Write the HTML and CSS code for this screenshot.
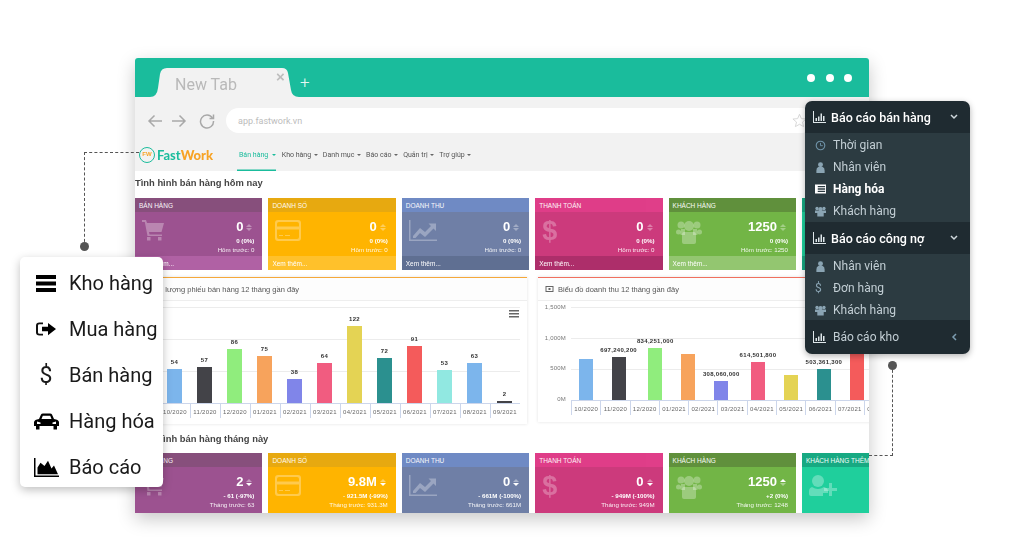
FILE: index.html
```html
<!DOCTYPE html>
<html>

<head>
  <meta http-equiv="Content-Type" content="text/html; charset=UTF-8" />
  <title>FastWork</title>
  <link rel="stylesheet" href="styles.css">
</head>

<body>
  <!-- shared icons -->
  <svg class="sprite" width="0" height="0">
    <symbol id="i-cart" viewBox="0 0 22 21"><path d="M0 0h4l1 3h17l-2.500 9H7l.5 2.500H20V16H5.500L2.800 2H0z" /><rect x="5" y="17" width="3.500" height="3.500" /><rect x="16" y="17" width="3.500" height="3.500" /></symbol>
    <symbol id="i-card" viewBox="0 0 26 21"><path fill-rule="evenodd" d="M3 0h20a3 3 0 0 1 3 3v15a3 3 0 0 1-3 3H3a3 3 0 0 1-3-3V3a3 3 0 0 1 3-3zm-1 4v2.500h22V4a2 2 0 0 0-2-2H4a2 2 0 0 0-2 2zm0 5.500V17a2 2 0 0 0 2 2h18a2 2 0 0 0 2-2V9.500zM4 15h4v1H4zm6 0h5v1h-5z" /></symbol>
    <symbol id="i-line" viewBox="0 0 28 21"><path d="M0 0h1.500v19.500H28V21H0z" /><path d="M4 16l7-8 5 4 6-6-2.500-2.500H27V11l-2.500-2.500-8.500 8.500-5-4-4.500 5H4z" /></symbol>
    <symbol id="i-users" viewBox="0 0 26 24"><circle cx="5" cy="5" r="3.500" /><circle cx="21" cy="5" r="3.500" /><circle cx="13" cy="6" r="5" /><circle cx="2.500" cy="12" r="2.500" /><circle cx="23.500" cy="12" r="2.500" /><path d="M5 9h4v6H4.500zM21 9h-4v6h4.500z" /><path d="M8 12h10q2 0 2 3v7q0 2-2 2H8q-2 0-2-2v-7q0-3 2-3z" /></symbol>
    <symbol id="i-userplus" viewBox="0 0 28 21"><circle cx="9" cy="6" r="6" /><path d="M3 12q6 4 12 0 4 1 4 4v2H14v3H2q-2 0-2-2v-3q0-3 3-4z" /><path d="M20 8h3v5h5v3h-5v5h-3v-5h-5v-3h5z" /></symbol>
    <symbol id="i-barchart" viewBox="0 0 13 12"><path d="M0 0h1v11h12v1H0z" /><path d="M2.500 10V7H4v3zM5 10V5.500h1.500V10zM7.500 10V2.500H9V10zM10 10V5h1.500v5z" /></symbol>
    <symbol id="i-clock" viewBox="0 0 12 12"><circle cx="6" cy="6" r="4.700" fill="none" stroke="currentColor" stroke-width="1.200" /><path d="M6 3.200v3h2.500" fill="none" stroke="currentColor" /></symbol>
    <symbol id="i-user" viewBox="0 0 12 12"><circle cx="6" cy="3" r="2.700" /><path d="M3.500 5.500h5q2 .5 2 4V12h-9V9.500q0-3.500 2-4z" /></symbol>
    <symbol id="i-list" viewBox="0 0 12 10"><path fill-rule="evenodd" d="M0 0h12v10H0zM3 1.800v1.400h8V1.800zM3 4.300v1.400h8V4.300zM3 6.800v1.400h8V6.800z" /></symbol>
    <symbol id="i-crowd" viewBox="0 0 12 11"><circle cx="2.200" cy="2.200" r="1.800" /><circle cx="9.800" cy="2.200" r="1.800" /><circle cx="6" cy="3" r="2.300" /><path d="M0 4.500h12V7H9.500v4h-7V7H0z" /></symbol>
    <symbol id="i-down" viewBox="0 0 8 6"><path d="M1 1l3 3 3-3" fill="none" stroke="currentColor" stroke-width="1.500" /></symbol>
    <symbol id="i-left" viewBox="0 0 6 8"><path d="M5 1L2 4l3 3" fill="none" stroke="currentColor" stroke-width="1.500" /></symbol>
  </svg>

  <div class="browser">
    <div class="tabbar">
      <div class="tab">
        <svg class="tab-shape" width="149" height="29" viewBox="0 0 149 29"><path d="M0 29q7 0 8-9l2-14q1-6 7-6h115q5 0 6 5l3 17q1 7 8 7z" /></svg>
        <span class="tab-title">New Tab</span>
        <span class="tab-close">×</span>
      </div>
      <span class="tab-new">+</span>
      <div class="win-dots"><i></i><i></i><i></i></div>
    </div>

    <div class="toolbar">
      <svg class="tool" width="16" height="14" viewBox="0 0 16 14"><path d="M15 7H2M7.500 1.500L2 7l5.500 5.500" /></svg>
      <svg class="tool" width="16" height="14" viewBox="0 0 16 14"><path d="M1 7h13M8.500 1.500L14 7l-5.500 5.500" /></svg>
      <svg class="tool reload" width="16" height="16" viewBox="0 0 16 16"><path d="M13.500 5A6.500 6.500 0 1 0 14.500 8" /><path d="M14.500 1.500V5.500H10.500" /></svg>
      <div class="address">
        <span>app.fastwork.vn</span>
        <svg class="star" width="15" height="15" viewBox="0 0 24 24"><path d="M12 2l3 7 7.500.6-5.700 4.900 1.800 7.300L12 18l-6.600 3.800 1.800-7.300L1.500 9.600 9 9z" /></svg>
      </div>
    </div>

    <div class="appnav">
      <div class="logo">
        <span class="logo-mark">FW</span>
        <span class="logo-text">Fast<b>Work</b></span>
      </div>
      <ul class="menu">
        <li class="active">Bán hàng</li>
        <li>Kho hàng</li>
        <li>Danh mục</li>
        <li>Báo cáo</li>
        <li>Quản trị</li>
        <li>Trợ giúp</li>
      </ul>
    </div>

    <h3 class="section-title">Tình hình bán hàng hôm nay</h3>
    <div class="cards">
      <div class="card purple">
        <div class="card-head">BÁN HÀNG</div>
        <div class="card-body">
          <svg class="card-icon" width="22" height="21"><use href="#i-cart" /></svg>
          <div class="figures">
            <div class="num">0<span class="sort"></span></div>
            <div class="pct">0 (0%)</div>
            <div class="prev">Hôm trước: 0</div>
          </div>
        </div>
        <div class="card-foot">Xem thêm...</div>
      </div>
      <div class="card yellow">
        <div class="card-head">DOANH SỐ</div>
        <div class="card-body">
          <svg class="card-icon" width="26" height="21"><use href="#i-card" /></svg>
          <div class="figures">
            <div class="num">0<span class="sort"></span></div>
            <div class="pct">0 (0%)</div>
            <div class="prev">Hôm trước: 0</div>
          </div>
        </div>
        <div class="card-foot">Xem thêm...</div>
      </div>
      <div class="card blue">
        <div class="card-head">DOANH THU</div>
        <div class="card-body">
          <svg class="card-icon" width="28" height="21"><use href="#i-line" /></svg>
          <div class="figures">
            <div class="num">0<span class="sort"></span></div>
            <div class="pct">0 (0%)</div>
            <div class="prev">Hôm trước: 0</div>
          </div>
        </div>
        <div class="card-foot">Xem thêm...</div>
      </div>
      <div class="card pink">
        <div class="card-head">THANH TOÁN</div>
        <div class="card-body">
          <span class="card-dollar">$</span>
          <div class="figures">
            <div class="num">0<span class="sort"></span></div>
            <div class="pct">0 (0%)</div>
            <div class="prev">Hôm trước: 0</div>
          </div>
        </div>
        <div class="card-foot">Xem thêm...</div>
      </div>
      <div class="card green">
        <div class="card-head">KHÁCH HÀNG</div>
        <div class="card-body">
          <svg class="card-icon" width="26" height="24"><use href="#i-users" /></svg>
          <div class="figures">
            <div class="num">1250<span class="sort"></span></div>
            <div class="pct">0 (0%)</div>
            <div class="prev">Hôm trước: 1250</div>
          </div>
        </div>
        <div class="card-foot">Xem thêm...</div>
      </div>
      <div class="card teal">
        <div class="card-head">KHÁCH HÀNG THÊM</div>
        <div class="card-body"></div>
        <div class="card-foot"></div>
      </div>
    </div>

    <div class="charts">
      <div class="panel panel-orange">
        <div class="panel-head panel-head-first">Số lượng phiếu bán hàng 12 tháng gần đây</div>
        <div class="chart chart-count">
          <svg class="chart-menu" width="10" height="8" viewBox="0 0 10 8"><path d="M0 0h10v1.500H0zM0 3h10v1.500H0zM0 6h10v1.500H0z" /></svg>
          <div class="plot">
            <div class="col"><em>54</em><i style="height:34px;background:#7cb5ec"></i></div>
            <div class="col"><em>57</em><i style="height:36px;background:#434348"></i></div>
            <div class="col"><em>86</em><i style="height:54px;background:#90ed7d"></i></div>
            <div class="col"><em>75</em><i style="height:47px;background:#f7a35c"></i></div>
            <div class="col"><em>38</em><i style="height:24px;background:#8085e9"></i></div>
            <div class="col"><em>64</em><i style="height:40px;background:#f15c80"></i></div>
            <div class="col"><em>122</em><i style="height:77px;background:#e4d354"></i></div>
            <div class="col"><em>72</em><i style="height:45px;background:#2b908f"></i></div>
            <div class="col"><em>91</em><i style="height:57px;background:#f45b5b"></i></div>
            <div class="col"><em>53</em><i style="height:33px;background:#91e8e1"></i></div>
            <div class="col"><em>63</em><i style="height:40px;background:#7cb5ec"></i></div>
            <div class="col"><em>2</em><i style="height:2px;background:#434348"></i></div>
          </div>
          <div class="xaxis">
            <span>10/2020</span><span>11/2020</span><span>12/2020</span><span>01/2021</span><span>02/2021</span><span>03/2021</span><span>04/2021</span><span>05/2021</span><span>06/2021</span><span>07/2021</span><span>08/2021</span><span>09/2021</span>
          </div>
        </div>
      </div>

      <div class="panel panel-red">
        <div class="panel-head">
          <svg class="money" width="9" height="6" viewBox="0 0 8 6"><path fill-rule="evenodd" d="M0 0h8v6H0zM1 1v4h6V1zM3 2h2v2H3z" /></svg>
          Biểu đồ doanh thu 12 tháng gần đây
        </div>
        <div class="chart chart-money">
          <div class="yaxis"><span>1,500M</span><span>1,000M</span><span>500M</span><span>0M</span></div>
          <div class="chart-main">
            <div class="plot">
              <div class="col"><i style="height:41px;background:#7cb5ec"></i></div>
              <div class="col"><em>697,240,200</em><i style="height:43px;background:#434348"></i></div>
              <div class="col"><em>834,251,000</em><i style="height:52px;background:#90ed7d"></i></div>
              <div class="col"><i style="height:46px;background:#f7a35c"></i></div>
              <div class="col"><em>308,060,000</em><i style="height:19px;background:#8085e9"></i></div>
              <div class="col"><em>614,501,800</em><i style="height:38px;background:#f15c80"></i></div>
              <div class="col"><i style="height:25px;background:#e4d354"></i></div>
              <div class="col"><em>503,361,300</em><i style="height:31px;background:#2b908f"></i></div>
              <div class="col"><i style="height:58px;background:#f45b5b"></i></div>
              <div class="col"><em>463,663,200</em><i style="height:29px;background:#91e8e1"></i></div>
            </div>
            <div class="xaxis">
              <span>10/2020</span><span>11/2020</span><span>12/2020</span><span>01/2021</span><span>02/2021</span><span>03/2021</span><span>04/2021</span><span>05/2021</span><span>06/2021</span><span>07/2021</span><span>08/2021</span>
            </div>
          </div>
        </div>
      </div>
    </div>

    <h3 class="section-title section-title-month">Tình hình bán hàng tháng này</h3>
    <div class="cards">
      <div class="card purple">
        <div class="card-head">BÁN HÀNG</div>
        <div class="card-body">
          <svg class="card-icon" width="22" height="21"><use href="#i-cart" /></svg>
          <div class="figures">
            <div class="num">2<span class="sort sort-down"></span></div>
            <div class="pct">- 61 (-97%)</div>
            <div class="prev">Tháng trước: 63</div>
          </div>
        </div>
      </div>
      <div class="card yellow">
        <div class="card-head">DOANH SỐ</div>
        <div class="card-body">
          <svg class="card-icon" width="26" height="21"><use href="#i-card" /></svg>
          <div class="figures">
            <div class="num">9.8M<span class="sort sort-down"></span></div>
            <div class="pct">- 921.5M (-99%)</div>
            <div class="prev">Tháng trước: 931.3M</div>
          </div>
        </div>
      </div>
      <div class="card blue">
        <div class="card-head">DOANH THU</div>
        <div class="card-body">
          <svg class="card-icon" width="28" height="21"><use href="#i-line" /></svg>
          <div class="figures">
            <div class="num">0<span class="sort sort-down"></span></div>
            <div class="pct">- 661M (-100%)</div>
            <div class="prev">Tháng trước: 661M</div>
          </div>
        </div>
      </div>
      <div class="card pink">
        <div class="card-head">THANH TOÁN</div>
        <div class="card-body">
          <span class="card-dollar">$</span>
          <div class="figures">
            <div class="num">0<span class="sort sort-down"></span></div>
            <div class="pct">- 949M (-100%)</div>
            <div class="prev">Tháng trước: 949M</div>
          </div>
        </div>
      </div>
      <div class="card green">
        <div class="card-head">KHÁCH HÀNG</div>
        <div class="card-body">
          <svg class="card-icon" width="26" height="24"><use href="#i-users" /></svg>
          <div class="figures">
            <div class="num">1250<span class="sort sort-up"></span></div>
            <div class="pct">+2 (0%)</div>
            <div class="prev">Tháng trước: 1248</div>
          </div>
        </div>
      </div>
      <div class="card teal">
        <div class="card-head">KHÁCH HÀNG THÊM</div>
        <div class="card-body">
          <svg class="card-icon" width="28" height="21"><use href="#i-userplus" /></svg>
        </div>
      </div>
    </div>
  </div>

  <!-- callout lines -->
  <div class="leader leader-left"></div>
  <div class="leader leader-right"></div>
  <i class="dot dot-left"></i>
  <i class="dot dot-right"></i>

  <ul class="quick">
    <li>
      <span class="q-icon"><svg width="20" height="17" viewBox="0 0 20 17"><path d="M0 0h20v4H0zM0 6.500h20v4H0zM0 13h20v4H0z" /></svg></span>
      Kho hàng
    </li>
    <li>
      <span class="q-icon"><svg width="20" height="14" viewBox="0 0 20 16" preserveAspectRatio="none"><path d="M7 1.500H3.500Q1 1.500 1 4v8q0 2.500 2.500 2.500H7" fill="none" stroke="#111" stroke-width="2" /><path d="M6 5.500h6V1l8 7-8 7v-4.500H6z" /></svg></span>
      Mua hàng
    </li>
    <li><span class="q-icon q-dollar">$</span>Bán hàng</li>
    <li>
      <span class="q-icon"><svg width="25" height="17" viewBox="0 0 25 17"><path fill-rule="evenodd" d="M5 6l2-4.500Q7.500.5 9 .5h7q1.500 0 2 1L20 6q4.500.5 5 3v4h-2v3.500h-3.500V13h-14v3.500H2V13H0V9q.5-2.500 5-3zM7.500 6h10l-1.300-3.300H8.800zM3 8.500v2.500h3.500V9.500zM22 8.500l-3.500 1V11H22z" /></svg></span>
      Hàng hóa
    </li>
    <li>
      <span class="q-icon"><svg width="25" height="19" viewBox="0 0 25 20" preserveAspectRatio="none"><path d="M0 0h1.500v18.500H25V20H0z" /><path d="M3.500 17V10l3-5 4 3.500L14 3l3.500 8 2.500-3 4 9z" /></svg></span>
      Báo cáo
    </li>
  </ul>

  <div class="report-menu">
    <div class="rm-head">
      <svg width="13" height="12"><use href="#i-barchart" /></svg>
      <span>Báo cáo bán hàng</span>
      <svg class="rm-arrow" width="8" height="6"><use href="#i-down" /></svg>
    </div>
    <ul class="rm-sub rm-sub-first">
      <li><svg width="11" height="11"><use href="#i-clock" /></svg>Thời gian</li>
      <li><svg width="11" height="11"><use href="#i-user" /></svg>Nhân viên</li>
      <li class="current"><svg width="11" height="10"><use href="#i-list" /></svg>Hàng hóa</li>
      <li><svg width="11" height="11"><use href="#i-crowd" /></svg>Khách hàng</li>
    </ul>
    <div class="rm-head">
      <svg width="13" height="12"><use href="#i-barchart" /></svg>
      <span>Báo cáo công nợ</span>
      <svg class="rm-arrow" width="8" height="6"><use href="#i-down" /></svg>
    </div>
    <ul class="rm-sub">
      <li><svg width="11" height="11"><use href="#i-user" /></svg>Nhân viên</li>
      <li><span class="rm-dollar">$</span>Đơn hàng</li>
      <li><svg width="11" height="11"><use href="#i-crowd" /></svg>Khách hàng</li>
    </ul>
    <div class="rm-head rm-head-closed">
      <svg width="13" height="12"><use href="#i-barchart" /></svg>
      <span>Báo cáo kho</span>
      <svg class="rm-arrow rm-arrow-left" width="6" height="8"><use href="#i-left" /></svg>
    </div>
  </div>
</body>

</html>
```

FILE: styles.css
```css
html {
  height: 100%;
}

body {
  margin: 0;
  height: 555px;
  overflow: hidden;
  position: relative;
  background: #fff;
  font-family: "Liberation Sans", Arial, sans-serif;
}

ul {
  list-style: none;
  margin: 0;
  padding: 0;
}

.sprite {
  position: absolute;
}

/* browser window sits on a free canvas */
.browser {
  position: absolute;
  left: 135px;
  top: 58px;
  width: 734px;
  height: 455px;
  overflow: hidden;
  background: #fff;
  border-radius: 3px 3px 0 0;
  box-shadow: 0 6px 18px rgba(0, 0, 0, 0.22);
  filter: blur(0.35px);
}

.tabbar {
  display: flex;
  align-items: flex-end;
  height: 39px;
  background: #1abc9c;
}

.tab {
  position: relative;
  display: flex;
  align-items: center;
  width: 149px;
  height: 29px;
  margin-left: 15px;
}

.tab-shape {
  position: absolute;
  left: 0;
  top: 0;
  fill: #f2f2f2;
}

.tab-title {
  position: relative;
  margin: 4px 0 0 25px;
  font-family: Roboto, sans-serif;
  font-size: 16px;
  color: #b9b9b9;
}

.tab-close {
  position: absolute;
  left: 126px;
  top: 0;
  font-size: 15px;
  font-weight: bold;
  line-height: 17px;
  color: #bdbdbd;
}

.tab-new {
  margin: 0 0 3px 1px;
  font-family: Roboto, sans-serif;
  font-size: 17px;
  font-weight: 300;
  line-height: 24px;
  color: #e6f7f3;
}

.win-dots {
  display: flex;
  gap: 10.500px;
  margin: 0 17px 15.500px auto;
}

.win-dots i {
  width: 8px;
  height: 8px;
  border-radius: 50%;
  background: #fff;
}

.toolbar {
  display: flex;
  align-items: center;
  height: 25px;
  padding: 11px 0 0 12px;
  gap: 8px;
  background: #f2f2f2;
}

.tool {
  fill: none;
  stroke: #a9a9a9;
  stroke-width: 1.500;
}

.reload {
  margin: 0 2px 0 4px;
}

.address {
  display: flex;
  align-items: center;
  justify-content: space-between;
  width: 588px;
  height: 25px;
  margin-left: 1px;
  padding: 0 7px 0 12px;
  box-sizing: border-box;
  border-radius: 13px;
  background: #fff;
  font-family: Roboto, sans-serif;
  font-size: 9px;
  color: #bcbcbc;
}

.star {
  fill: none;
  stroke: #d5d5d5;
  stroke-width: 1.500;
}

.appnav {
  display: flex;
  align-items: stretch;
  height: 38px;
  background: #f2f2f2;
}

.logo {
  display: flex;
  align-items: center;
  width: 102px;
  padding-left: 4px;
  box-sizing: border-box;
}

.logo-mark {
  width: 16px;
  height: 16px;
  box-sizing: border-box;
  margin-top: 6px;
  border: 1.500px solid #1abc9c;
  border-radius: 50%;
  font-size: 6px;
  font-weight: bold;
  line-height: 13px;
  text-align: center;
  color: #f7a325;
}

.logo-text {
  margin: 6px 0 0 2px;
  font-family: Lato, sans-serif;
  font-size: 13px;
  font-weight: bold;
  color: #1abc9c;
}

.logo-text b {
  color: #f7a325;
}

.menu {
  display: flex;
  align-items: stretch;
  font-family: Roboto, sans-serif;
  font-size: 7px;
  color: #555;
}

.menu li {
  display: flex;
  align-items: center;
  padding-top: 6px;
  margin-right: 5.200px;
}

.menu li::after {
  content: "";
  margin-left: 2.500px;
  border: 2.500px solid transparent;
  border-top-color: #666;
  border-bottom: 0;
}

.menu .active {
  margin-right: 5.500px;
  padding-left: 2px;
  color: #1abc9c;
  box-shadow: inset 0 -1.500px 0 #1abc9c;
}

.menu .active::after {
  margin-left: 4px;
  border-top-color: #1abc9c;
}

.section-title {
  height: 27px;
  margin: 0;
  box-sizing: border-box;
  padding-top: 6px;
  font-size: 9.400px;
  line-height: 12px;
  font-weight: bold;
  color: #444;
}

.section-title-month {
  height: 29px;
  padding-top: 9px;
}

.cards {
  display: flex;
  gap: 6px;
}

.card {
  flex: 0 0 127.400px;
  height: 72px;
  display: flex;
  flex-direction: column;
  font-size: 6.500px;
  color: #fff;
}

.card-head {
  height: 14px;
  flex: none;
  padding-left: 4px;
  font-size: 6.500px;
  line-height: 15px;
  white-space: nowrap;
  overflow: hidden;
  opacity: 0.95;
}

.card-body {
  height: 44px;
  flex: none;
  display: flex;
  justify-content: space-between;
  padding: 8px 8px 0 7px;
  box-sizing: border-box;
}

.card-icon {
  fill: rgba(255, 255, 255, 0.3);
}

.card-dollar {
  width: 20px;
  margin-top: -6px;
  font-size: 27px;
  line-height: 34px;
  font-weight: bold;
  color: rgba(255, 255, 255, 0.28);
}

.card-foot {
  height: 14px;
  flex: none;
  padding-left: 4px;
  line-height: 15px;
}

.figures {
  text-align: right;
}

.num {
  display: flex;
  justify-content: flex-end;
  align-items: center;
  font-size: 13px;
  line-height: 14px;
  font-weight: bold;
}

.sort {
  display: inline-flex;
  flex-direction: column;
  gap: 1px;
  margin: 0 2px 0 3px;
  opacity: 0.35;
}

.sort::before,
.sort::after {
  content: "";
  border: 3px solid transparent;
}

.sort::before {
  border-top: 0;
  border-bottom-color: #fff;
}

.sort::after {
  border-bottom: 0;
  border-top-color: #fff;
}

.sort-down,
.sort-up {
  opacity: 1;
}

.sort-down::before {
  border-bottom-color: rgba(255, 255, 255, 0.4);
}

.sort-up::after {
  border-top-color: rgba(255, 255, 255, 0.4);
}

.pct {
  margin-top: 3px;
  font-size: 6.200px;
  line-height: 7px;
  font-weight: bold;
}

.prev {
  margin-top: 2px;
  font-size: 6.200px;
  line-height: 8px;
  opacity: 0.9;
}

.purple { background: #9c5290; }
.purple .card-head { background: #86507c; }
.purple .card-foot { background: #b061a4; }

.yellow { background: #ffb400; }
.yellow .card-head { background: #e6a911; }
.yellow .card-foot { background: #ffc12b; }

.blue { background: #6f7fa6; }
.blue .card-head { background: #6f8cc6; }
.blue .card-foot { background: #5f6f92; }

.pink { background: #cc3a7c; }
.pink .card-head { background: #e03e8a; }
.pink .card-foot { background: #ad2e6a; }

.green { background: #72b546; }
.green .card-head { background: #5f8f3d; }
.green .card-foot { background: #93c670; }

.teal { background: #1fcf9c; }
.teal .card-head { background: #18a781; }
.teal .card-foot { background: #18a781; }

.charts {
  display: flex;
  align-items: flex-start;
  gap: 11px;
  margin-top: 7px;
}

.panel {
  flex: none;
  box-sizing: border-box;
  background: #fff;
  box-shadow: 0 0 3px rgba(0, 0, 0, 0.12);
}

.panel-orange {
  width: 392px;
  height: 147px;
  border-top: 1px solid #f5a83a;
}

.panel-red {
  width: 340px;
  height: 145px;
  border-top: 1px solid #f0705f;
}

.panel-head {
  display: flex;
  align-items: center;
  gap: 4px;
  height: 22px;
  padding-left: 7px;
  border-bottom: 1px solid #eee;
  background: #fdfdfd;
  font-size: 7.500px;
  color: #555;
}

.panel-head-first {
  padding-left: 19px;
}

.money {
  fill: #666;
}

.chart {
  position: relative;
}

.chart-count {
  padding: 6px 0 0 24.500px;
}

.chart-menu {
  position: absolute;
  right: 8px;
  top: 9px;
  fill: #666;
}

.plot {
  display: flex;
  align-items: flex-end;
  height: 96px;
  border-bottom: 1px solid #ccd6eb;
  background: linear-gradient(#ececec, #ececec) 0 0 / 100% 1px no-repeat,
    linear-gradient(#ececec, #ececec) 0 32px / 100% 1px no-repeat,
    linear-gradient(#ececec, #ececec) 0 63.500px / 100% 1px no-repeat;
}

.chart-count .plot,
.chart-count .xaxis {
  width: 360px;
}

.col {
  flex: 0 0 30px;
  display: flex;
  flex-direction: column;
  align-items: center;
}

.col em {
  margin-bottom: 3px;
  font-size: 6px;
  line-height: 7px;
  font-style: normal;
  font-weight: bold;
  letter-spacing: 0.300px;
  white-space: nowrap;
  color: #333;
}

.col i {
  width: 15px;
}

.xaxis {
  display: flex;
}

.xaxis span {
  flex: 0 0 30px;
  box-sizing: border-box;
  height: 14px;
  padding-top: 4px;
  border-left: 1px solid #ccd6eb;
  background: linear-gradient(#fff, #fff) 0 4px / 100% 10px no-repeat;
  font-size: 6px;
  line-height: 8px;
  letter-spacing: 0.300px;
  text-align: center;
  color: #666;
}

.chart-money {
  display: flex;
  padding-top: 6px;
}

.yaxis {
  flex: none;
  display: flex;
  flex-direction: column;
  justify-content: space-between;
  width: 28px;
  height: 98px;
  margin-top: -3px;
  margin-right: 5px;
  font-size: 6px;
  line-height: 6px;
  letter-spacing: 0.200px;
  text-align: right;
  color: #777;
}

.chart-main {
  flex: none;
  width: 322px;
}

.chart-money .plot {
  height: 93px;
  background: linear-gradient(#ececec, #ececec) 0 0 / 100% 1px no-repeat,
    linear-gradient(#ececec, #ececec) 0 31px / 100% 1px no-repeat,
    linear-gradient(#ececec, #ececec) 0 62px / 100% 1px no-repeat;
}

.chart-money .col,
.chart-money .xaxis span {
  flex-basis: 29.300px;
}

.chart-money .col i {
  width: 14px;
}

/* callout lines */
.leader {
  position: absolute;
  border: 0 dashed #555;
}

.leader-left {
  left: 84px;
  top: 152px;
  width: 54px;
  height: 94px;
  border-width: 1px 0 0 1px;
}

.leader-right {
  left: 869px;
  top: 365px;
  width: 23px;
  height: 90px;
  border-width: 0 1px 1px 0;
}

.dot {
  position: absolute;
  width: 9px;
  height: 9px;
  border-radius: 50%;
  background: #555;
}

.dot-left {
  left: 80px;
  top: 242px;
}

.dot-right {
  left: 888px;
  top: 361px;
}

/* floating quick menu */
.quick {
  position: absolute;
  left: 20px;
  top: 257px;
  width: 143px;
  height: 230px;
  padding-top: 3px;
  box-sizing: border-box;
  border-radius: 5px;
  background: #fff;
  box-shadow: 0 3px 10px rgba(0, 0, 0, 0.25);
  font-family: Roboto, sans-serif;
  font-size: 20px;
  color: #1a1a1a;
  filter: blur(0.25px);
}

.quick li {
  height: 46px;
  display: flex;
  align-items: center;
  gap: 10px;
  padding-left: 13px;
  white-space: nowrap;
}

.q-icon {
  flex: none;
  display: flex;
  justify-content: center;
  width: 26px;
}

.q-dollar {
  font-size: 23px;
}

/* floating report menu */
.report-menu {
  position: absolute;
  left: 805px;
  top: 101px;
  width: 165px;
  height: 253px;
  overflow: hidden;
  border-radius: 7px;
  background: #1f2b31;
  box-shadow: 0 2px 6px rgba(0, 0, 0, 0.3);
  font-family: Roboto, sans-serif;
  font-size: 12px;
  color: #c2ced4;
  filter: blur(0.25px);
}

.rm-head {
  display: flex;
  align-items: center;
  height: 32px;
  padding: 0 12px 0 8px;
  font-size: 12.500px;
  font-weight: 500;
  color: #fff;
  fill: #dfe7ea;
}

.rm-head span {
  margin-left: 5px;
}

.rm-head-closed {
  height: 34px;
  font-size: 12px;
  font-weight: 400;
  color: #c2ced4;
}

.rm-head-closed span {
  margin-left: 7px;
}

.rm-arrow {
  margin-left: auto;
  color: #cfd8dc;
}

.rm-arrow-left {
  color: #7c9cb0;
  margin-right: 1px;
}

.rm-sub {
  background: #2c3b41;
}

.rm-sub-first {
  padding-bottom: 1px;
}

.rm-sub li {
  display: flex;
  align-items: center;
  box-sizing: border-box;
  height: 22px;
  padding: 2px 0 0 10px;
  fill: #8aa4b3;
}

.rm-sub li svg {
  margin-right: 7px;
  color: #6f93a8;
}

.rm-sub .current {
  font-weight: bold;
  color: #fff;
  fill: #fff;
}

.rm-dollar {
  width: 11px;
  margin-right: 7px;
  color: #8aa4b3;
}
```
